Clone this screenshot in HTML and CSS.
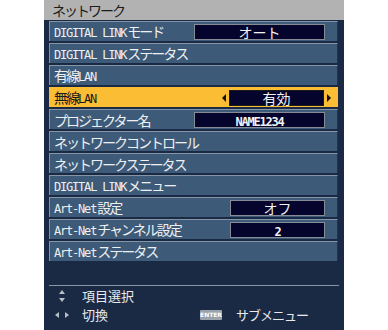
FILE: index.html
```html
<!DOCTYPE html>
<html lang="ja">
<head>
<meta charset="utf-8">
<link rel="stylesheet" href="styles.css">
</head>
<body>
<div class="panel">
  <div class="title">ネットワーク</div>
  <div class="rows">
    <div class="row"><span class="label"><span class="lat">DIGITAL LINK</span>モード</span><span class="val wide">オート</span></div>
    <div class="row"><span class="label"><span class="lat">DIGITAL LINK</span>ステータス</span></div>
    <div class="row"><span class="label">有線<span class="lat">LAN</span></span></div>
    <div class="row sel"><span class="label">無線<span class="lat">LAN</span></span><span class="arr left"></span><span class="val narrow">有効</span><span class="arr right"></span></div>
    <div class="row"><span class="label">プロジェクター名</span><span class="val wide"><span class="lat b">NAME1234</span></span></div>
    <div class="row"><span class="label">ネットワークコントロール</span></div>
    <div class="row"><span class="label">ネットワークステータス</span></div>
    <div class="row"><span class="label"><span class="lat">DIGITAL LINK</span>メニュー</span></div>
    <div class="row"><span class="label"><span class="lat">Art-Net</span>設定</span><span class="val narrow">オフ</span></div>
    <div class="row"><span class="label"><span class="lat">Art-Net</span>チャンネル設定</span><span class="val narrow"><span class="lat b">2</span></span></div>
    <div class="row"><span class="label"><span class="lat">Art-Net</span>ステータス</span></div>
  </div>
  <div class="footer">
    <div class="help">
      <span class="ico"><svg width="8" height="12" viewBox="0 0 8 12"><path d="M4 0 L7 4 L1 4 Z" fill="#b8bec8"/><path d="M1 8 L7 8 L4 12 Z" fill="#b8bec8"/></svg></span>
      <span class="htext">項目選択</span>
    </div>
    <div class="help">
      <span class="ico"><svg width="14" height="8" viewBox="0 0 14 8"><path d="M0 4 L4 1 L4 7 Z" fill="#b8bec8"/><path d="M14 4 L10 1 L10 7 Z" fill="#b8bec8"/></svg></span>
      <span class="htext">切換</span>
      <span class="enter">ENTER</span>
      <span class="htext sub">サブメニュー</span>
    </div>
  </div>
</div>
</body>
</html>
```

FILE: styles.css
```css
* { box-sizing: border-box; }
html, body { margin: 0; padding: 0; background: #ffffff; }
body {
  font-family: "Noto Sans CJK JP", "Noto Sans", sans-serif;
}
.panel {
  margin-left: 44px;
  width: 300px;
  height: 330px;
  background: #1b2a44;
  display: flex;
  flex-direction: column;
}
.title {
  height: 20px;
  background: #b2b2b2;
  color: #1c1c1c;
  font-size: 14px;
  letter-spacing: -2px;
  line-height: 20px;
  padding-left: 8px;
}
.rows {
  display: flex;
  flex-direction: column;
  gap: 2px;
  padding: 1px 6px 0 5px;
}
.row {
  height: 20px;
  display: flex;
  align-items: center;
  background: #3d5a78;
  border-top: 1px solid #8595a8;
  border-left: 1px solid #8595a8;
  border-right: 1px solid #22344d;
  color: #eef0f2;
  font-size: 14px;
  letter-spacing: -2px;
  padding-left: 4px;
}
.row.sel {
  background: #fbbd33;
  border-color: #fbbd33;
  color: #1a1a1a;
}
.label { flex: 1; white-space: nowrap; line-height: 18px; }
.lat {
  font-family: "DejaVu Sans Mono", monospace;
  font-size: 12px;
  letter-spacing: -1.2px;
  margin-right: 1px;
}
.lat.b { font-weight: bold; letter-spacing: -1.2px; margin-right: 0; }
.val {
  height: 16px;
  background: #04042c;
  border: 1px solid #868c96;
  color: #f2f2f2;
  text-align: center;
  line-height: 14px;
  font-size: 14px;
  letter-spacing: 0;
  margin-right: 12px;
}
.val.wide { width: 131px; }
.val.narrow { width: 95px; }
.row.sel .val { margin-right: 0; border-color: #1a1a1a; }
.arr { width: 0; height: 0; border-top: 4px solid transparent; border-bottom: 4px solid transparent; }
.arr.left { border-right: 4px solid #111; margin-right: 3px; }
.arr.right { border-left: 4px solid #111; margin-left: 3px; margin-right: 6px; }
.footer {
  margin: 24px 5px 0 5px;
  border-top: 1px solid #8a94a2;
  display: flex;
  flex-direction: column;
}
.help {
  height: 19px;
  display: flex;
  align-items: center;
  color: #e8eaee;
  font-size: 13px;
}
.ico {
  width: 33px;
  display: flex;
  padding-left: 6px;
  justify-content: flex-start;
}
.help:first-child .ico { padding-left: 9px; }
.htext { letter-spacing: 0; }
.enter {
  margin-left: 92px;
  width: 22px;
  height: 10px;
  background: #9aa2ac;
  color: #ffffff;
  font-family: "DejaVu Sans", sans-serif;
  font-size: 6px;
  font-weight: bold;
  line-height: 10px;
  text-align: center;
  border-radius: 1px;
}
.sub { margin-left: 14px; letter-spacing: -1px; }
```
